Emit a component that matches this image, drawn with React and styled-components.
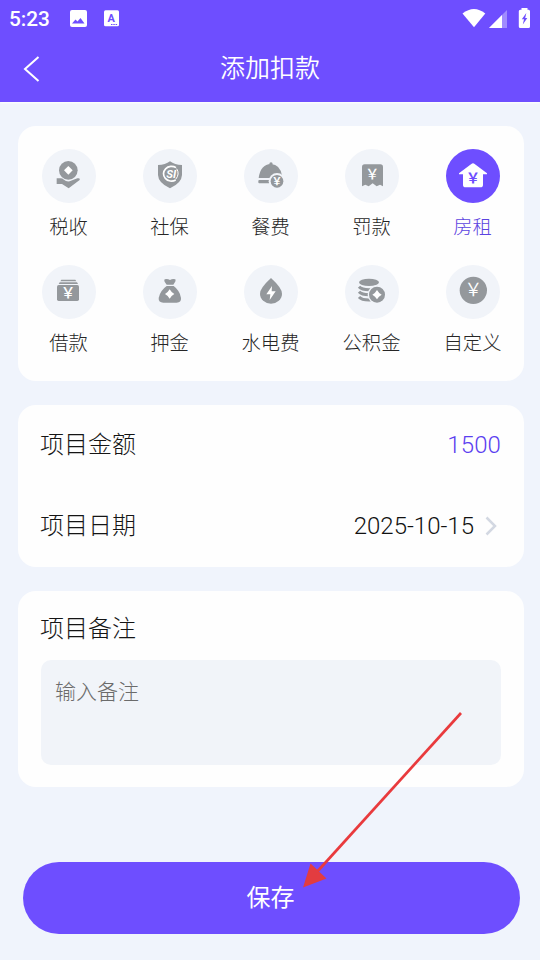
import React, { useState } from "react";
import styled, { createGlobalStyle } from "styled-components";

const PURPLE = "#6e4eff";
const GREY = "#94989c";
const PALE = "#f1f4f9";

const GlobalStyle = createGlobalStyle`
  * {
    box-sizing: border-box;
  }
  body {
    margin: 0;
    background: #f0f4fc;
    font-family: Roboto, "Noto Sans CJK SC", sans-serif;
    font-weight: 300;
  }
`;

const Page = styled.div`
  position: relative;
  display: flex;
  flex-direction: column;
  width: 540px;
  height: 960px;
  overflow: hidden;
`;

const Header = styled.header`
  height: 102px;
  background: ${PURPLE};
  color: #fff;
  box-shadow: 0 1px 2px #fff;
`;

const StatusBar = styled.div`
  display: flex;
  align-items: center;
  height: 36px;
  padding: 0 9px 0 9px;
`;

const Time = styled.span`
  width: 60px;
  font-size: 20.8px;
  font-weight: 500;
  line-height: 24px;
  padding-top: 2px;
`;

const StatusIcons = styled.div`
  margin-left: auto;
  display: flex;
  align-items: center;
`;

const NavBar = styled.div`
  display: grid;
  grid-template-columns: 62px 1fr 62px;
  align-items: center;
  height: 64px;
`;

const BackButton = styled.button`
  display: flex;
  padding: 2px 0 0 22px;
  border: 0;
  background: none;
`;

const Title = styled.h1`
  margin: 0;
  padding-top: 2px;
  font-size: 25px;
  font-weight: 350;
  line-height: 36px;
  text-align: center;
`;

const Main = styled.main`
  display: flex;
  flex-direction: column;
  gap: 24px;
  padding: 24px 16px 0 18px;
`;

const Card = styled.section`
  height: ${(props) => props.$height}px;
  border-radius: 18px;
  background: #fefefe;
`;

const CategoryGrid = styled.div`
  display: grid;
  grid-template-columns: repeat(5, 101px);
  grid-auto-rows: 116px;
  padding-top: 23px;
`;

const Category = styled.button`
  display: flex;
  flex-direction: column;
  align-items: center;
  padding: 0;
  border: 0;
  background: none;
  font: inherit;
  font-size: 19.3px;
  line-height: 28px;
  color: ${(props) => (props.$active ? "#5b43e0" : "#262626")};
`;

const IconCircle = styled.span`
  width: 54px;
  height: 54px;
  margin-bottom: 11px;
  border-radius: 50%;
  background: ${(props) => (props.$active ? PURPLE : PALE)};

  svg {
    display: block;
  }
`;

const Row = styled.div`
  display: flex;
  align-items: center;
  justify-content: space-between;
  height: 81px;
  padding: 0 23px 2px 22px;
`;

const Label = styled.span`
  font-size: 24px;
  line-height: 36px;
  color: #151515;
`;

const Amount = styled.span`
  font-size: 24px;
  font-weight: 350;
  letter-spacing: 0.1px;
  color: #5b40f0;
`;

const DateValue = styled.span`
  display: flex;
  align-items: center;
  gap: 11px;
  padding-right: 4px;
  font-size: 24px;
  font-weight: 350;
  color: #111;
`;

const NoteCard = styled(Card)`
  display: flex;
  flex-direction: column;
  gap: 13px;
  padding: 20px 23px 0;

  ${Label} {
    margin-left: -1px;
  }
`;

const NoteInput = styled.textarea`
  width: 460px;
  height: 105px;
  padding: 16px 14px;
  border: 0;
  border-radius: 10px;
  background: ${PALE};
  resize: none;
  outline: none;
  font: inherit;
  font-size: 21px;
  line-height: 32px;

  &::placeholder {
    color: #6b6b6b;
    opacity: 1;
  }
`;

const SaveButton = styled.button`
  height: 72px;
  margin: auto 20px 26px 23px;
  padding: 0 2px 0 0;
  border: 0;
  border-radius: 36px;
  background: ${PURPLE};
  color: #fff;
  font: inherit;
  font-size: 24px;
  font-weight: 400;
  line-height: 36px;
`;

const Arrow = styled.svg`
  position: absolute;
  left: 295px;
  top: 705px;
  pointer-events: none;
`;

const Yen = ({ x, y, size, color = "#fff", weight = 500 }) => (
  <text
    x={x}
    y={y}
    fontSize={size}
    fontWeight={weight}
    fontFamily="'Noto Sans CJK SC', sans-serif"
    fill={color}
    textAnchor="middle"
  >
    ￥
  </text>
);

const Star = ({ x, y, r }) => (
  <path
    transform={`translate(${x} ${y}) scale(${r})`}
    d="M0-1Q.35-.35 1 0Q.35.35 0 1Q-.35.35-1 0Q-.35-.35 0-1Z"
    fill="#fff"
  />
);

const TaxIcon = () => (
  <>
    <circle cx="79" cy="64" r="28" />
    <path d="M79 51L92 64L79 77L66 64Z" fill="#fff" />
    <path d="M44 88H56Q61 88 66 92Q73 99 83 97L106 88Q116 86 113 93L80 118L60 105H44Z" />
  </>
);

const InsuranceIcon = () => (
  <>
    <path d="M81 37Q95 48 117 48V78Q116 102 81 118Q46 102 45 78V48Q67 48 81 37Z" />
    <path
      d="M99 56A24 22 0 1 0 98 93"
      fill="none"
      stroke="#fff"
      strokeWidth="5"
    />
    <path d="M101 59Q111 75 98 91" fill="none" stroke="#fff" strokeWidth="3" />
    <text
      x="85"
      y="87"
      fontSize="34"
      fontWeight="700"
      fontStyle="italic"
      fontFamily="Roboto"
      fill="#fff"
      textAnchor="middle"
    >
      SI
    </text>
  </>
);

const MealIcon = () => (
  <>
    <circle cx="81" cy="45" r="5" />
    <path d="M44 87Q49 47 81 45Q109 47 114 80V87Z" />
    <rect x="43" y="93" width="34" height="10" rx="3" />
    <circle cx="99" cy="97" r="25" fill={PALE} />
    <circle cx="99" cy="97" r="19" />
    <Yen x="99" y="108" size="31" weight={700} />
  </>
);

const FineIcon = () => (
  <>
    <path d="M59 46H106Q114 46 114 54V112L105 107L95 112L83 103L71 112L61 107L51 112V54Q51 46 59 46Z" />
    <Yen x="82" y="91" size="42" />
  </>
);

const RentIcon = () => (
  <>
    <path d="M76 45Q81 40 86 45L123 73V76H111V107Q111 115 103 115H59Q51 115 51 107V76H39V73Z" />
    <Yen x="81" y="101" size="42" color={PURPLE} weight={700} />
  </>
);

const LoanIcon = () => (
  <>
    <path d="M58 44H100L103 49H55Z" />
    <path d="M53 52H105L108 57H50Z" />
    <rect x="45" y="60" width="66" height="48" rx="5" />
    <Yen x="78" y="99" size="44" />
  </>
);

const DepositIcon = () => (
  <>
    <path d="M65 43Q73 40 81 45Q89 40 97 43Q100 48 91 59H71Q61 48 65 43Z" />
    <path d="M71 63H92Q111 77 114 99Q115 113 101 113H61Q46 113 47 99Q51 77 71 63Z" />
    <Star x={80} y={87} r={14} />
  </>
);

const UtilityIcon = () => (
  <>
    <path d="M81 39Q114 69 114 86A33 30 0 0 1 48 86Q48 69 81 39Z" />
    <path d="M84 63L67 88H79L77 105L95 79H83Z" fill="#fff" />
  </>
);

const FundIcon = () => (
  <>
    <ellipse cx="72" cy="52" rx="30" ry="11" />
    <g fill="none" stroke={GREY} strokeWidth="9">
      <path d="M42 65Q50 74 72 74Q94 74 102 65" />
      <path d="M42 80Q50 89 72 89H80" />
      <path d="M42 96Q50 105 72 105H80" />
    </g>
    <circle cx="96" cy="89" r="28" fill={PALE} />
    <circle cx="96" cy="89" r="24" />
    <Star x={96} y={89} r={14} />
  </>
);

const CustomIcon = () => (
  <>
    <circle cx="82" cy="76" r="41" />
    <Yen x="82" y="94" size="53" weight={350} />
  </>
);

const categories = [
  { name: "税收", icon: TaxIcon },
  { name: "社保", icon: InsuranceIcon },
  { name: "餐费", icon: MealIcon },
  { name: "罚款", icon: FineIcon },
  { name: "房租", icon: RentIcon },
  { name: "借款", icon: LoanIcon },
  { name: "押金", icon: DepositIcon },
  { name: "水电费", icon: UtilityIcon },
  { name: "公积金", icon: FundIcon },
  { name: "自定义", icon: CustomIcon },
];

const StatusLeft = () => (
  <svg width="52" height="20" viewBox="69 8 52 20">
    <rect x="70" y="10" width="17" height="17" rx="2" fill="#fff" />
    <path d="M72 23.5L75.5 19.5L77.5 21.5L80.5 18L84.5 23.5Z" fill={PURPLE} />
    <rect x="104" y="10.3" width="15" height="16" rx="1.5" fill="#fff" />
    <text
      x="111.2"
      y="22"
      fontSize="11"
      fontWeight="700"
      fontFamily="Roboto"
      fill={PURPLE}
      textAnchor="middle"
    >
      A
    </text>
    <path
      d="M111 24.5H117.5"
      stroke={PURPLE}
      strokeWidth="1"
      strokeDasharray="1.5 .8"
    />
  </svg>
);

const StatusRight = () => (
  <svg width="70" height="22" viewBox="461 6 70 22">
    <path d="M462.5 12.5Q474 3.5 485.3 12.5L474 26.3Z" fill="#fff" />
    <path d="M507 9V27H489Z" fill="#fff" opacity=".35" />
    <path d="M502 14V27H489Z" fill="#fff" />
    <path
      d="M521.5 8.8V7H527.5V8.8H528.5Q530 8.8 530 10.3V25.5Q530 27 528.5 27H520.3Q518.8 27 518.8 25.5V10.3Q518.8 8.8 520.3 8.8Z"
      fill="#fff"
    />
    <path
      d="M526.3 12L521.8 18.3H524L522.8 23.5L527.3 17H525.2Z"
      fill={PURPLE}
    />
  </svg>
);

const App = () => {
  const [selected, setSelected] = useState("房租");
  const [note, setNote] = useState("");

  return (
    <>
      <GlobalStyle />
      <Page>
        <Header>
          <StatusBar>
            <Time>5:23</Time>
            <StatusLeft />
            <StatusIcons>
              <StatusRight />
            </StatusIcons>
          </StatusBar>
          <NavBar>
            <BackButton aria-label="返回">
              <svg width="20" height="28" viewBox="0 0 20 28">
                <path
                  d="M16.5 2L3 14L16.5 26"
                  fill="none"
                  stroke="#fff"
                  strokeWidth="2"
                />
              </svg>
            </BackButton>
            <Title>添加扣款</Title>
          </NavBar>
        </Header>
        <Main>
          <Card $height={255}>
            <CategoryGrid>
              {categories.map(({ name, icon: Icon }) => (
                <Category
                  key={name}
                  $active={name === selected}
                  onClick={() => setSelected(name)}
                >
                  <IconCircle $active={name === selected}>
                    <svg
                      width="54"
                      height="54"
                      viewBox="0 0 162 162"
                      fill={name === selected ? "#fff" : GREY}
                    >
                      <Icon />
                    </svg>
                  </IconCircle>
                  {name}
                </Category>
              ))}
            </CategoryGrid>
          </Card>
          <Card $height={162}>
            <Row>
              <Label>项目金额</Label>
              <Amount>1500</Amount>
            </Row>
            <Row>
              <Label>项目日期</Label>
              <DateValue>
                2025-10-15
                <svg width="12" height="20" viewBox="0 0 12 20">
                  <path
                    d="M1.5 1.5L10 10L1.5 18.5"
                    fill="none"
                    stroke="#d3d8e2"
                    strokeWidth="2.5"
                  />
                </svg>
              </DateValue>
            </Row>
          </Card>
          <NoteCard $height={196}>
            <Label>项目备注</Label>
            <NoteInput
              placeholder="输入备注"
              value={note}
              onChange={(e) => setNote(e.target.value)}
            />
          </NoteCard>
        </Main>
        <SaveButton>保存</SaveButton>
        <Arrow width="175" height="190" viewBox="295 705 175 190">
          <path d="M461 713L316 873" stroke="#e93a3d" strokeWidth="2.7" />
          <path d="M303 887.5L310.5 863.5L326.5 878.5Z" fill="#e33c40" />
        </Arrow>
      </Page>
    </>
  );
};

export default App;
